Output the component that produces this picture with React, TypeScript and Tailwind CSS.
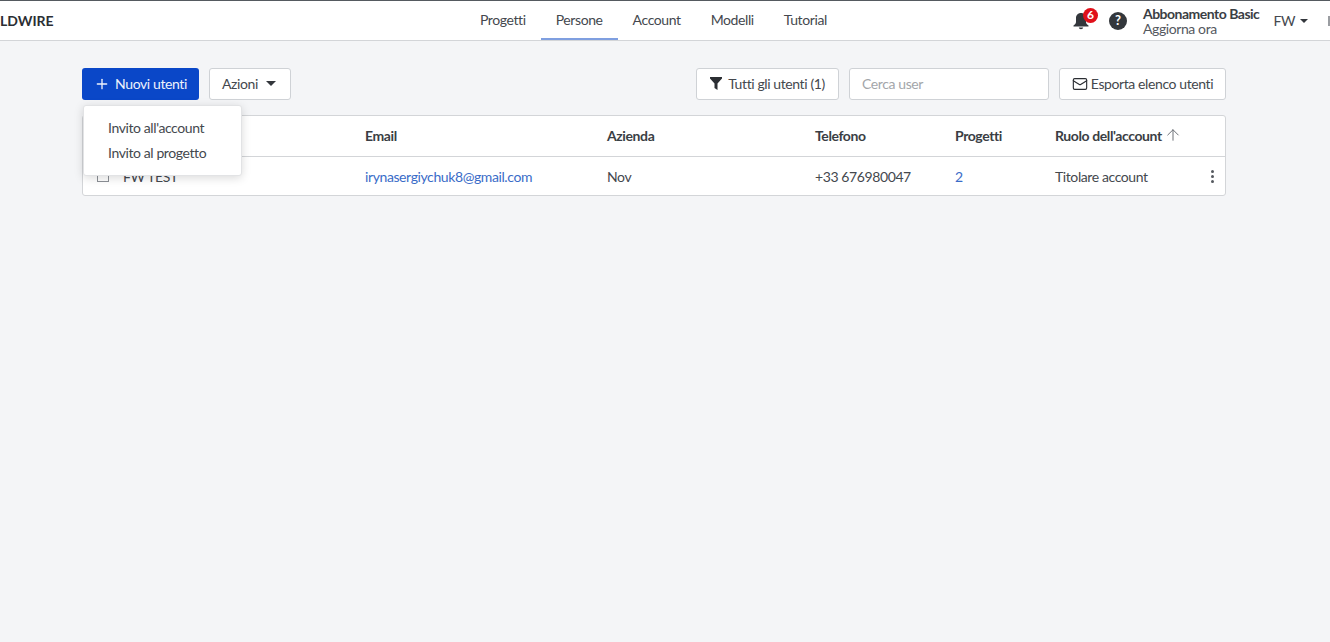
import { Plus, Mail, ArrowUp } from 'lucide-react';

const navItems = ['Progetti', 'Persone', 'Account', 'Modelli', 'Tutorial'];

const Caret = ({ className }: { className: string }) => (
  <svg viewBox="0 0 10 5" className={className} fill="currentColor">
    <path d="M0 0h10L5 5z" />
  </svg>
);

const Header = () => (
  <header className="flex h-[41px] items-stretch border-t border-b border-t-[#555a60] border-b-[#d3d5d8] bg-white">
    <div className="flex w-[465px] shrink-0 items-center">
      <span className="text-[14px] font-bold tracking-normal text-[#2b2e33]">LDWIRE</span>
    </div>
    <nav className="flex">
      {navItems.map((item) => (
        <a
          key={item}
          className={
            item === 'Persone'
              ? 'flex items-center border-b-2 border-[#7f9fe0] px-[15px] pb-[1px] text-[14px] text-[#44484e]'
              : 'flex items-center border-b-2 border-transparent px-[15px] pb-[1px] text-[14px] text-[#44484e]'
          }
        >
          {item}
        </a>
      ))}
    </nav>
    <div className="ml-auto flex items-center text-[#33373c]">
      <div className="relative mr-[20px] h-[20px] w-[16px]">
        <svg viewBox="0 0 16 20" className="h-[20px] w-[16px]" fill="#33373c">
          <path d="M8 2c-3 0-5 2.200-5 5.200V11c0 1.400-1.100 2.500-2.500 3.400V15.500h15v-1.100C14.100 13.500 13 12.400 13 11V7.200C13 4.200 11 2 8 2z" />
          <path d="M5.800 16.500h4.400c-.2 1-1.100 1.700-2.200 1.700s-2-.7-2.200-1.700z" />
        </svg>
        <span className="absolute left-[10px] top-[-3px] flex h-[15px] w-[15px] items-center justify-center rounded-full bg-[#e0101a] text-[12px] font-bold leading-none tracking-normal text-white">
          6
        </span>
      </div>
      <span className="mr-[16px] flex h-[18px] w-[18px] items-center justify-center rounded-full bg-[#33373c] text-[13px] font-bold leading-none tracking-normal text-white">
        ?
      </span>
      <div className="mr-[14px] flex flex-col text-[14px] leading-[15px]">
        <span className="font-bold tracking-[-0.5px] text-[#3a3e44]">Abbonamento Basic</span>
        <span className="text-[#55595f]">Aggiorna ora</span>
      </div>
      <span className="mr-[5px] text-[14px] text-[#44484e]">FW</span>
      <Caret className="mr-[20px] h-[4px] w-[8px]" />
      <span className="h-[10px] w-[2px] bg-[#9a9da1]" />
    </div>
  </header>
);

const Toolbar = () => (
  <div className="flex h-[32px] items-stretch text-[14px]">
    <button className="mr-[10px] flex w-[117px] items-center justify-center gap-[5px] rounded-[3px] bg-[#0a47c8] pb-[1px] text-[#eef2fb]">
      <Plus size={16} strokeWidth={2} />
      Nuovi utenti
    </button>
    <button className="flex w-[82px] items-center justify-center gap-[8px] rounded-[3px] border border-[#cfd2d6] bg-white pb-[1px] pr-[2px] text-[#44484e]">
      Azioni
      <Caret className="h-[5px] w-[10px] text-[#33373c]" />
    </button>
    <button className="ml-auto mr-[10px] flex w-[143px] items-center justify-center gap-[6px] rounded-[3px] border border-[#cfd2d6] bg-white pb-[1px] text-[#44484e]">
      <svg viewBox="0 0 12 13" className="h-[13px] w-[12px]" fill="#2b2e33">
        <path d="M0 0h12v1.500L7.500 6.500V13l-3-2V6.500L0 1.500z" />
      </svg>
      Tutti gli utenti (1)
    </button>
    <div className="mr-[10px] flex w-[200px] items-center rounded-[3px] border border-[#cfd2d6] bg-white px-[12px] pb-[1px] text-[#a3a6aa]">
      Cerca user
    </div>
    <button className="flex w-[167px] items-center justify-center gap-[3px] rounded-[3px] border border-[#cfd2d6] bg-white pb-[1px] text-[#44484e]">
      <Mail size={16} strokeWidth={1.7} className="text-[#2b2e33]" />
      Esporta elenco utenti
    </button>
  </div>
);

const Table = () => (
  <div className="mt-[15px] rounded-[3px] border border-[#d3d5d8] bg-white text-[14px]">
    <div className="flex h-[41px] items-center border-b border-[#d3d5d8] pb-[2px] font-bold text-[#3a3e44]">
      <span className="w-[282px] shrink-0" />
      <span className="w-[242px] shrink-0">Email</span>
      <span className="w-[208px] shrink-0">Azienda</span>
      <span className="w-[140px] shrink-0">Telefono</span>
      <span className="w-[100px] shrink-0">Progetti</span>
      <span className="flex items-center gap-[2px]">
        Ruolo dell'account
        <ArrowUp size={18} strokeWidth={1.3} className="text-[#6a6e74]" />
      </span>
    </div>
    <div className="flex h-[38px] items-center text-[#44484e]">
      <span className="ml-[14px] mr-[14px] h-[12px] w-[12px] shrink-0 border border-[#8c9096]" />
      <span className="w-[242px] shrink-0">FW TEST</span>
      <span className="w-[242px] shrink-0 text-[#3a6cc8]">irynasergiychuk8@gmail.com</span>
      <span className="w-[208px] shrink-0">Nov</span>
      <span className="w-[140px] shrink-0">+33 676980047</span>
      <span className="w-[100px] shrink-0 text-[#3a6cc8]">2</span>
      <span>Titolare account</span>
      <span className="ml-auto mr-[11px] flex flex-col gap-[2px]">
        <span className="h-[3px] w-[3px] rounded-full bg-[#55595f]" />
        <span className="h-[3px] w-[3px] rounded-full bg-[#55595f]" />
        <span className="h-[3px] w-[3px] rounded-full bg-[#55595f]" />
      </span>
    </div>
  </div>
);

export default function App() {
  return (
    <div className="flex h-[642px] flex-col overflow-hidden bg-[#f4f5f7] font-['Lato',sans-serif] tracking-[-0.4px]">
      <Header />
      <main className="relative ml-[82px] mr-[104px] pt-[27px]">
        <Toolbar />
        <Table />
        <div className="absolute left-[1px] top-[64px] flex h-[71px] w-[159px] flex-col justify-center gap-[10px] rounded-[3px] border border-[#e2e3e5] bg-white pb-[2px] pl-[24px] text-[14px] leading-[15px] text-[#44484e] shadow-[0_2px_10px_rgba(0,0,0,0.15)]">
          <span>Invito all'account</span>
          <span>Invito al progetto</span>
        </div>
      </main>
    </div>
  );
}
